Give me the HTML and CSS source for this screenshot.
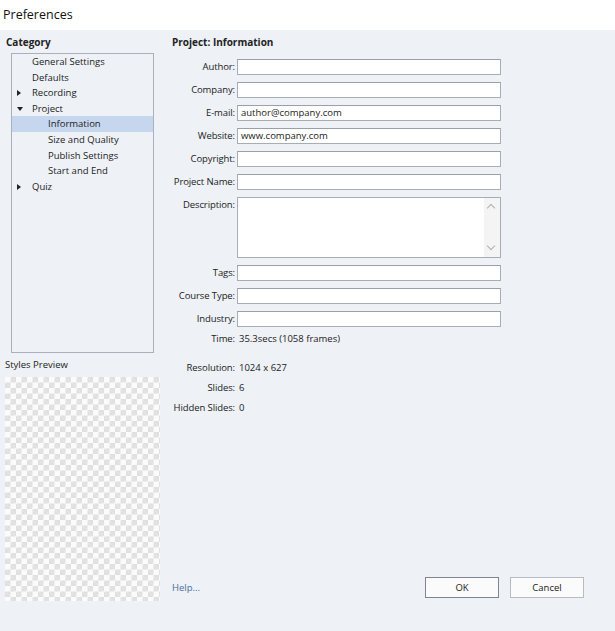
FILE: index.html
```html
<!DOCTYPE html>
<html>
<head>
<meta charset="utf-8">
<link rel="stylesheet" href="styles.css">
</head>
<body>
<div class="titlebar">Preferences</div>
<div class="main">
  <div class="left">
    <div class="heading">Category</div>
    <div class="tree">
      <div class="item l1">General Settings</div>
      <div class="item l1">Defaults</div>
      <div class="item l1"><span class="arrow right"></span>Recording</div>
      <div class="item l1"><span class="arrow down"></span>Project</div>
      <div class="item l2 sel">Information</div>
      <div class="item l2">Size and Quality</div>
      <div class="item l2">Publish Settings</div>
      <div class="item l2">Start and End</div>
      <div class="item l1"><span class="arrow right"></span>Quiz</div>
    </div>
    <div class="preview-label">Styles Preview</div>
    <div class="checker"></div>
  </div>
  <div class="right">
    <div class="heading">Project: Information</div>
    <div class="form">
      <div class="row"><label>Author:</label><div class="field"></div></div>
      <div class="row"><label>Company:</label><div class="field"></div></div>
      <div class="row"><label>E-mail:</label><div class="field">author@company.com</div></div>
      <div class="row"><label>Website:</label><div class="field">www.company.com</div></div>
      <div class="row"><label>Copyright:</label><div class="field"></div></div>
      <div class="row"><label>Project Name:</label><div class="field"></div></div>
      <div class="row desc"><label>Description:</label><div class="area"><div class="scroll"><span class="chev up"></span><span class="chev dn"></span></div></div></div>
      <div class="row"><label>Tags:</label><div class="field"></div></div>
      <div class="row"><label>Course Type:</label><div class="field"></div></div>
      <div class="row"><label>Industry:</label><div class="field"></div></div>
      <div class="row info time"><label>Time:</label><span>35.3secs (1058 frames)</span></div>
      <div class="row info res"><label>Resolution:</label><span>1024 x 627</span></div>
      <div class="row info"><label>Slides:</label><span>6</span></div>
      <div class="row info"><label>Hidden Slides:</label><span>0</span></div>
    </div>
    <div class="footer">
      <a class="help">Help...</a>
      <div class="buttons">
        <div class="btn ok">OK</div>
        <div class="btn">Cancel</div>
      </div>
    </div>
  </div>
</div>
</body>
</html>
```
FILE: styles.css
```css
html, body { margin: 0; padding: 0; }
body {
  width: 615px; height: 631px; overflow: hidden;
  background: #eef1f6;
  font-family: "Open Sans", "Noto Sans", sans-serif;
  font-size: 9.5px;
  color: #222;
}
.titlebar {
  height: 30px; background: #fff;
  font-size: 12.5px; line-height: 30px;
  padding-left: 3px; color: #111;
}
.main { display: flex; }
.left { width: 166px; padding-left: 5px; box-sizing: border-box; }
.heading { font-weight: bold; font-size: 10px; height: 23px; line-height: 24px; padding-left: 1px; }
.right .heading { padding-left: 0; }
.tree {
  margin-left: 6px; width: 143px; height: 300px; box-sizing: border-box;
  border: 1px solid #a9b0bb; background: #eef2f7;
}
.item { height: 15.6px; line-height: 15.6px; position: relative; white-space: nowrap; }
.l1 { padding-left: 20px; }
.l2 { padding-left: 36px; }
.sel { background: #c5d6ee; }
.arrow { position: absolute; left: 5px; top: 5px; width: 0; height: 0; }
.arrow.right { border-left: 4px solid #222; border-top: 3px solid transparent; border-bottom: 3px solid transparent; }
.arrow.down { top: 6px; border-top: 4px solid #222; border-left: 3px solid transparent; border-right: 3px solid transparent; }
.preview-label { margin-top: 5px; height: 19px; line-height: 14px; }
.checker {
  width: 155px; height: 224px;
  background-color: #fbfbfb;
  background-image:
    linear-gradient(45deg, #e0e0e0 25%, transparent 25%, transparent 75%, #e0e0e0 75%),
    linear-gradient(45deg, #e0e0e0 25%, transparent 25%, transparent 75%, #e0e0e0 75%);
  background-size: 11px 11px;
  background-position: 0 0, 5.5px 5.5px;
}
.right { flex: 1; padding-left: 6px; }
.form { margin-top: 6px; }
.row { display: flex; align-items: flex-start; height: 16px; margin-bottom: 7px; }
.row label { width: 63px; flex: none; text-align: right; padding-right: 2px; line-height: 16px; white-space: nowrap; letter-spacing: -0.1px; }
.field {
  width: 264px; height: 16px; box-sizing: border-box; background: #fff;
  border: 1px solid #a8adb5; border-top-color: #9aa0a8;
  padding-left: 3px; line-height: 14px;
}
.row.desc { height: 61px; }
.area {
  width: 264px; height: 61px; box-sizing: border-box; background: #fff;
  border: 1px solid #a8adb5; position: relative;
}
.scroll { position: absolute; right: 0; top: 0; bottom: 0; width: 16px; background: #f4f4f4; }
.chev { position: absolute; left: 4px; width: 5px; height: 5px; border-left: 1px solid #b0b0b0; border-top: 1px solid #b0b0b0; }
.chev.up { top: 7px; transform: rotate(45deg); }
.chev.dn { bottom: 8px; transform: rotate(225deg); }
.row.info { margin-bottom: 4px; }
.row.info span { line-height: 16px; padding-left: 2px; }
.row.time { margin-top: -3px; margin-bottom: 13px; }
.footer { display: flex; align-items: center; justify-content: space-between; margin-top: 161px; width: 412px; }
.help { color: #4a6fa0; padding-left: 0; }
.buttons { display: flex; gap: 11px; }
.btn {
  width: 74px; height: 21px; box-sizing: border-box; background: #fbfbfc;
  border: 1px solid #b7bcc4; text-align: center; line-height: 19px;
}
.btn.ok { border: 1px solid #7d8591; }
```
